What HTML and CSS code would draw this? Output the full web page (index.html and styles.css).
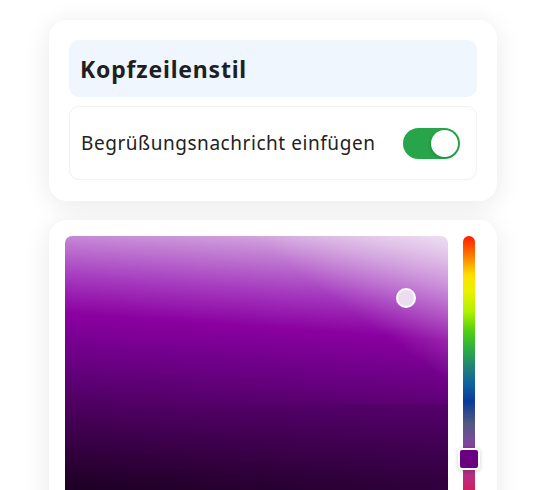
FILE: index.html
```html
<!DOCTYPE html>
<html lang="de">
<head>
  <meta charset="UTF-8">
  <title>Kopfzeilenstil</title>
  <link rel="stylesheet" href="styles.css">
</head>
<body>
<div class="page">
  <div class="card settings">
    <div class="settings-head">Kopfzeilenstil</div>
    <div class="settings-row">
      <span class="row-label">Begrüßungsnachricht einfügen</span>
      <span class="toggle on"><span class="toggle-knob"></span></span>
    </div>
  </div>

  <div class="card picker">
    <div class="sv-area">
      <span class="sv-thumb"></span>
    </div>
    <div class="hue-track">
      <span class="hue-thumb"></span>
    </div>
  </div>
</div>
</body>
</html>
```

FILE: styles.css
```css
html, body {
  margin: 0;
  background: #ffffff;
}

body {
  font-family: "Noto Sans", "Lato", sans-serif;
  color: #222222;
  overflow: hidden;
}

.page {
  width: 448px;
  padding: 20px 0 0 49px;
  display: flex;
  flex-direction: column;
  gap: 19px;
}

.card {
  background: #ffffff;
  border-radius: 18px;
  box-shadow: 0 4px 26px rgba(0, 0, 0, 0.09);
}

/* header card */

.settings {
  padding: 20px 20px 21px;
  display: flex;
  flex-direction: column;
  gap: 9px;
}

.settings-head {
  height: 57px;
  background: #eff6fe;
  border-radius: 10px;
  padding: 0 11px;
  display: flex;
  align-items: center;
  font-size: 23px;
  font-weight: 700;
  color: #1f1f1f;
  letter-spacing: 0.8px;
}

.settings-row {
  height: 72px;
  border: 1px solid #f2f2f2;
  border-radius: 10px;
  padding: 0 16px 0 11px;
  display: flex;
  align-items: center;
  justify-content: space-between;
}

.row-label {
  font-size: 19px;
  color: #222222;
  letter-spacing: 0.55px;
}

.toggle {
  width: 57px;
  height: 31px;
  border-radius: 16px;
  background: #28a44a;
  position: relative;
}

.toggle-knob {
  position: absolute;
  top: 2px;
  right: 2px;
  width: 27px;
  height: 27px;
  border-radius: 50%;
  background: #ffffff;
  box-shadow: -1px 1px 3px rgba(0, 0, 0, 0.15);
}

/* colour picker card */

.picker {
  height: 300px;
  padding: 16px 22px 0 16px;
  display: flex;
  gap: 15px;
}

.sv-area {
  flex: 1;
  height: 280px;
  border-radius: 7px 7px 0 0;
  position: relative;
  background:
    linear-gradient(to bottom left, rgba(255, 255, 255, 0.5) 0%, rgba(255, 255, 255, 0) 26%),
    linear-gradient(to right, rgba(0, 0, 0, 0) 0%, rgba(60, 0, 80, 0.25) 100%) bottom / 100% 40% no-repeat,
    linear-gradient(184deg,
      #dcbde4 0%,
      #c07ad2 11%,
      #a53abf 22%,
      #8a00a0 34%,
      #74008e 44%,
      #58006e 58%,
      #3c004a 73%,
      #1e0024 90%,
      #12001a 100%);
}

.sv-thumb {
  position: absolute;
  left: 331px;
  top: 52px;
  width: 16px;
  height: 16px;
  border: 2px solid #ffffff;
  border-radius: 50%;
  background: #ecdcef;
}

.hue-track {
  width: 12px;
  height: 280px;
  border-radius: 6px 6px 0 0;
  position: relative;
  background: linear-gradient(to bottom,
    #ff1a00 0%,
    #ff7a00 7%,
    #ffe000 14%,
    #e8f200 20%,
    #b0f000 27%,
    #50d010 34%,
    #30b040 40%,
    #20807a 47%,
    #1060a0 53%,
    #0a3a9a 59%,
    #505a80 67%,
    #7a4a9a 73%,
    #8a3a96 78%,
    #c02a7a 87%,
    #e81040 95%,
    #ff0030 100%);
}

.hue-thumb {
  position: absolute;
  left: -5px;
  top: 212px;
  width: 18px;
  height: 18px;
  border: 2px solid #ffffff;
  border-radius: 4px;
  background: #6a0080;
  box-shadow: 0 1px 4px rgba(0, 0, 0, 0.2);
}
```
